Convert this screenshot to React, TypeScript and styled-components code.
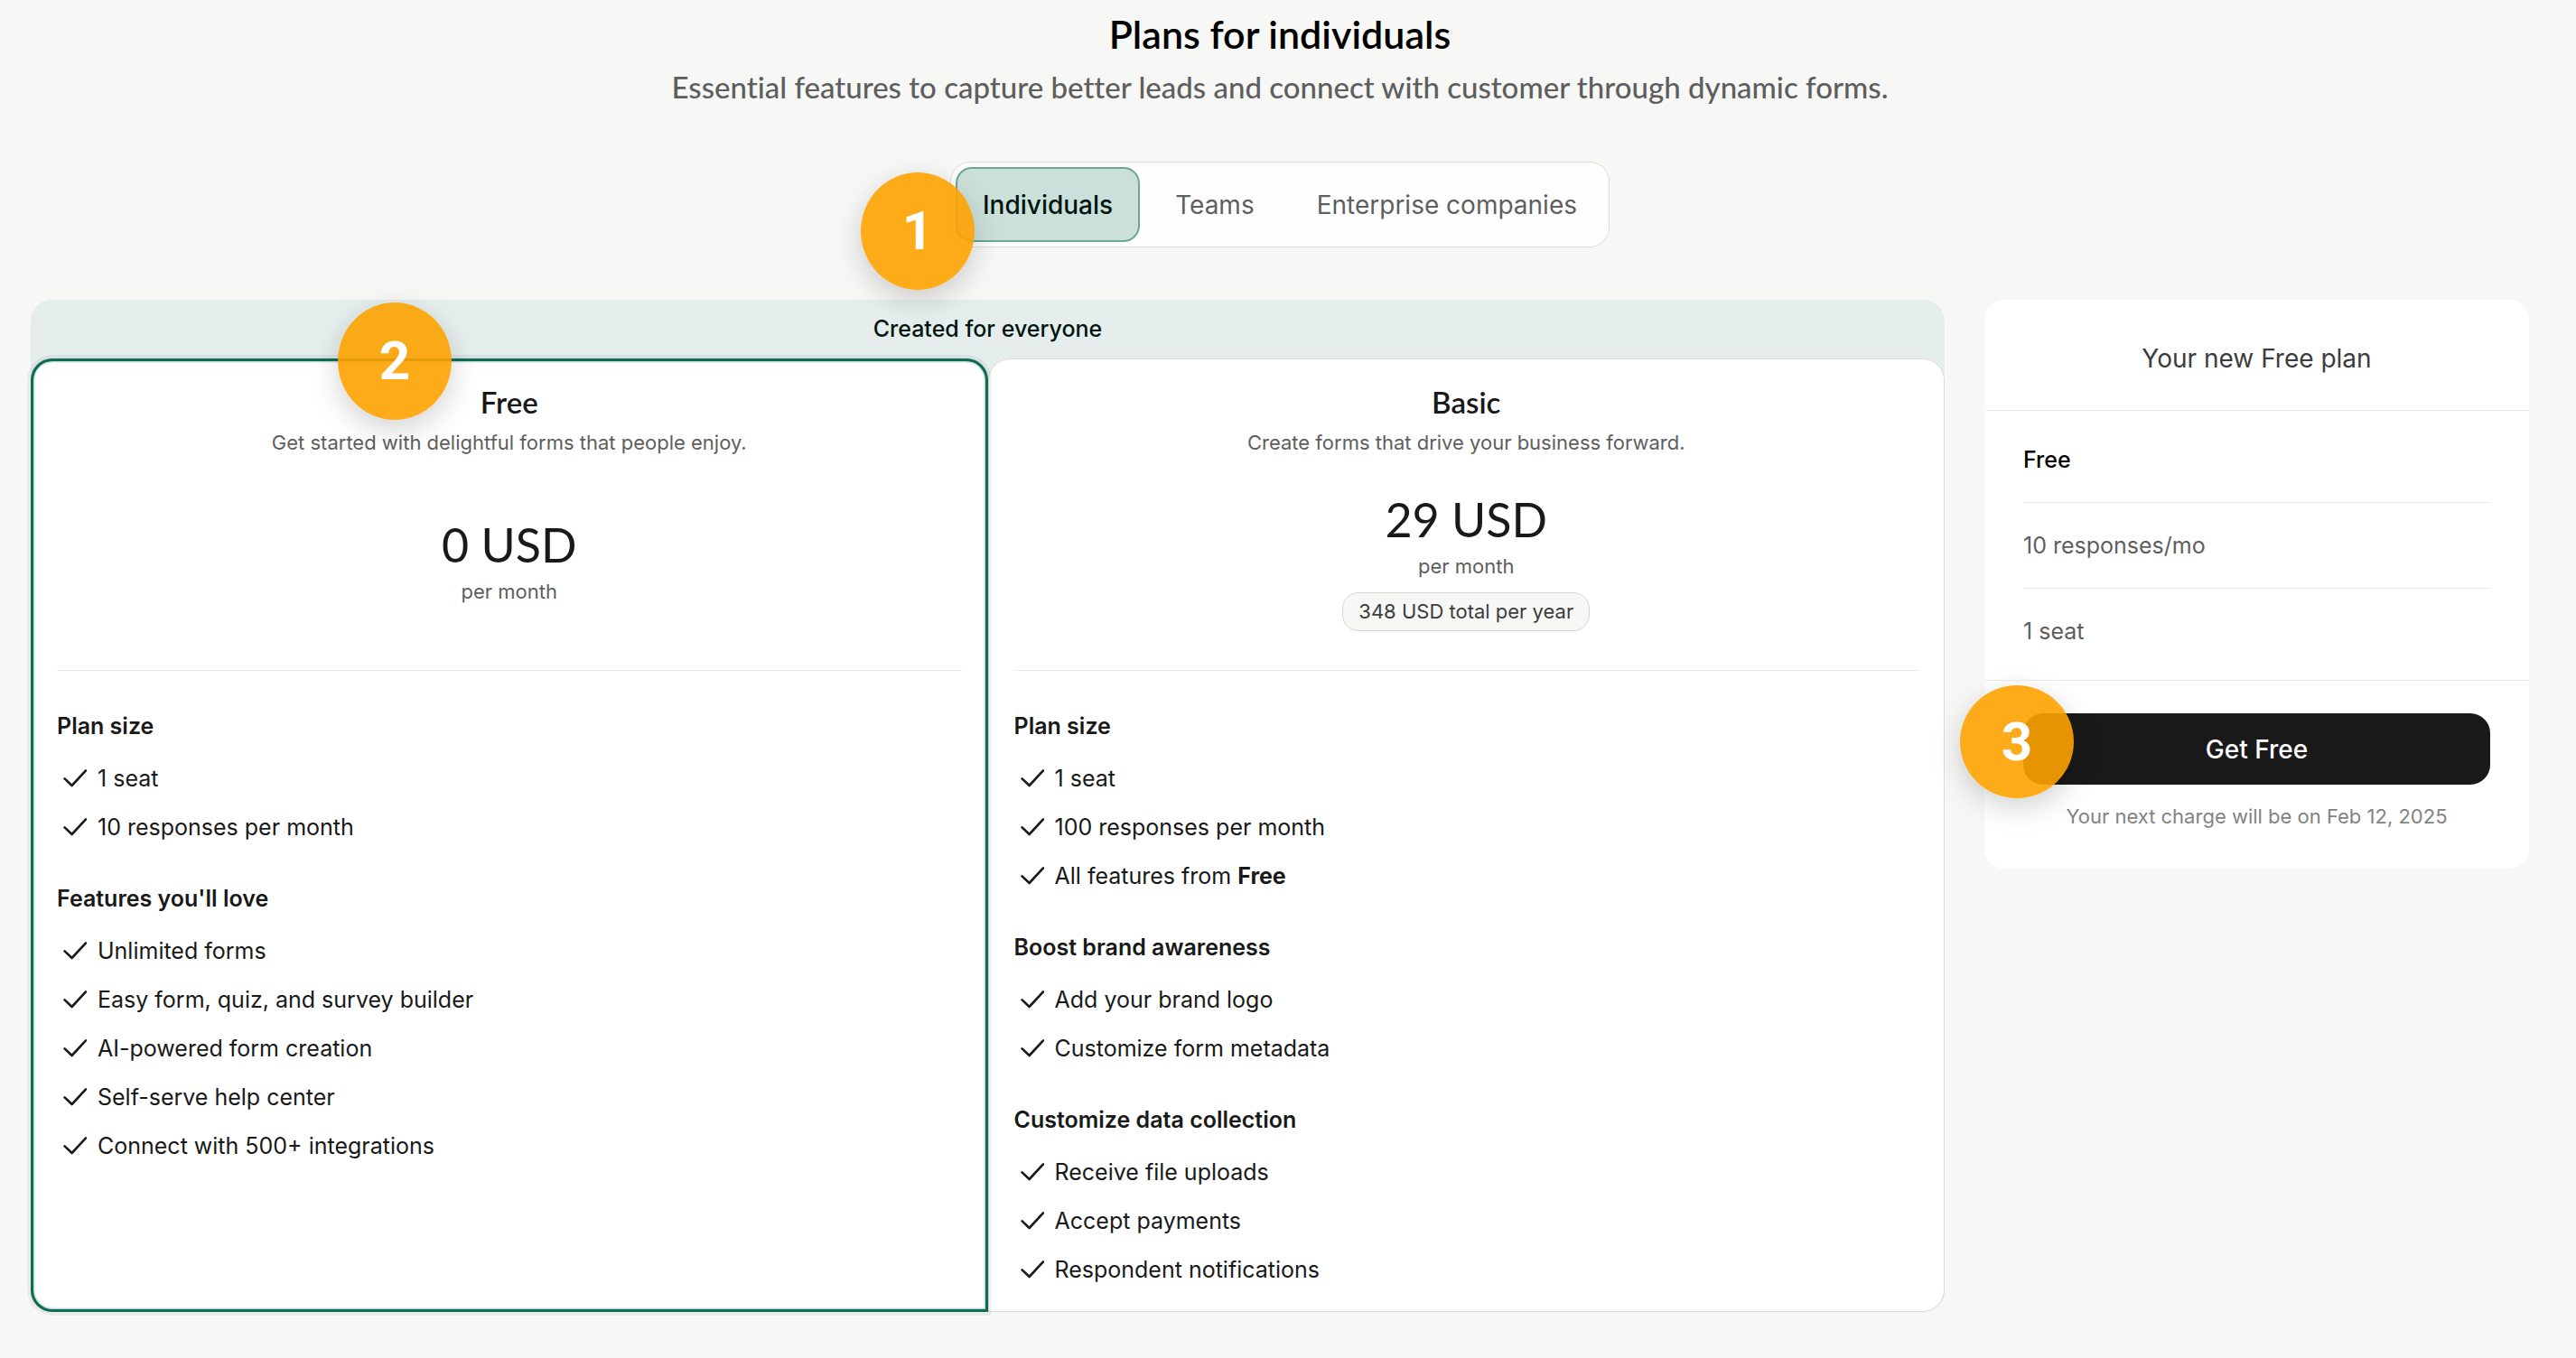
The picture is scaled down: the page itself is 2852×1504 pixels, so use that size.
import React, { useState } from "react";
import styled, { createGlobalStyle } from "styled-components";

const heading = `Lato, "Open Sans", sans-serif`;
const body = `Inter, "Liberation Sans", sans-serif`;

const GlobalStyle = createGlobalStyle`
  *, *::before, *::after { box-sizing: border-box; }
  body {
    margin: 0;
    background: #f7f7f5;
    color: #191919;
    font-family: ${body};
    font-size: 25px;
    -webkit-font-smoothing: antialiased;
  }
  h1, h2, h3, p, ul { margin: 0; padding: 0; }
  ul { list-style: none; }
  button { font-family: inherit; cursor: pointer; }
`;

const Page = styled.main`
  padding: 14px 52px 51px 34px;
`;

const Header = styled.header`
  display: flex;
  flex-direction: column;
  align-items: center;
  gap: 10px;
  text-align: center;
  font-family: ${heading};
  font-variant-ligatures: none;
`;

const Title = styled.h1`
  font-size: 43px;
  line-height: 48px;
  font-weight: 600;
  color: #000;
`;

const Subtitle = styled.p`
  font-size: 33px;
  line-height: 48px;
  font-weight: 500;
  color: #5e5e5e;
`;

const TabsWrap = styled.div`
  position: relative;
  width: fit-content;
  margin: 59px auto 58px;
`;

const TabList = styled.div`
  display: flex;
  gap: 9px;
  padding: 5px;
  border: 1px solid #dcdcda;
  border-radius: 22px;
  background: #fefefe;
`;

const Tab = styled.button<{ $active: boolean }>`
  height: 83px;
  padding: 0 28px;
  border: 2px solid ${(p) => (p.$active ? "#6ba898" : "#fefefe")};
  border-radius: 18px;
  background: ${(p) => (p.$active ? "#cce0db" : "#fefefe")};
  color: ${(p) => (p.$active ? "#00150f" : "#5e5e5e")};
  font-size: 28px;
  font-weight: ${(p) => (p.$active ? 500 : 400)};
`;

const Badge = styled.span<{ $left: number; $top: number; $height?: number }>`
  position: absolute;
  z-index: 2;
  left: ${(p) => p.$left}px;
  top: ${(p) => p.$top}px;
  display: flex;
  align-items: center;
  justify-content: center;
  width: 126px;
  height: ${(p) => p.$height ?? 130}px;
  border-radius: 50%;
  background: rgba(253, 162, 0, 0.9);
  box-shadow: 0 10px 32px rgba(0, 0, 0, 0.18);
  color: #fff;
  font-family: Roboto, sans-serif;
  font-size: 60px;
  font-weight: 700;
  line-height: 60px;
`;

const Columns = styled.div`
  display: grid;
  grid-template-columns: minmax(0, 1fr) 603px;
  align-items: start;
  gap: 44px;
`;

const Plans = styled.section`
  border-radius: 24px;
  background: #e5eeec;
`;

const Banner = styled.h2`
  font-size: 25px;
  line-height: 65px;
  font-weight: 500;
  color: #00150f;
  text-align: center;
`;

const PlanGrid = styled.div`
  display: grid;
  grid-template-columns: 1fr 1fr;
`;

const Card = styled.article<{ $selected?: boolean }>`
  position: relative;
  padding: 28px 29px 20px;
  border-radius: ${(p) => (p.$selected ? "24px 24px 0 24px" : "24px 24px 24px 0")};
  background: #fff;
  box-shadow: ${(p) =>
    p.$selected
      ? "inset 0 0 0 3px #0e6b56, inset 0 0 2px 4px rgba(14, 107, 86, 0.35), 0 0 0 4px rgba(0, 0, 0, 0.05)"
      : "inset 0 0 0 1px #dadad8"};
  z-index: ${(p) => (p.$selected ? 1 : 0)};
`;

const PlanName = styled.h3`
  font-family: ${heading};
  font-size: 33px;
  line-height: 40px;
  font-weight: 600;
  text-align: center;
`;

const PlanText = styled.p`
  margin-top: 8px;
  font-size: 22px;
  line-height: 34px;
  color: #5e5e5e;
  text-align: center;
`;

const PriceBox = styled.div`
  display: flex;
  flex-direction: column;
  align-items: center;
  justify-content: center;
  height: 227px;
  margin-bottom: 8px;
`;

const Price = styled.p`
  font-family: ${heading};
  font-size: 52px;
  line-height: 66px;
`;

const Period = styled.p`
  margin-top: 3px;
  font-size: 22px;
  line-height: 32px;
  color: #5e5e5e;
`;

const Total = styled.span`
  margin-top: 13px;
  padding: 0 17px;
  border: 1px solid #d4d4d2;
  border-radius: 18px;
  background: #f7f7f5;
  font-size: 22px;
  line-height: 41px;
  color: #3c3c3c;
`;

const Features = styled.div`
  display: flex;
  flex-direction: column;
  gap: 34px;
  padding-top: 43px;
  border-top: 1px solid #ebebeb;
`;

const GroupTitle = styled.h4`
  margin: 0 0 13px;
  font-size: 25px;
  line-height: 36px;
  font-weight: 600;
`;

const Feature = styled.li`
  display: flex;
  align-items: center;
  gap: 12px;
  padding-left: 7px;
  line-height: 54px;

  strong { font-weight: 700; }
`;

const Summary = styled.aside`
  border-radius: 22px;
  background: #fff;
`;

const SummaryTitle = styled.h2`
  padding: 45px 43px 37px;
  border-bottom: 1px solid #ebebeb;
  font-size: 28px;
  line-height: 40px;
  font-weight: 400;
  color: #3c3c3c;
  text-align: center;
`;

const SummaryList = styled.ul`
  padding: 7px 43px;
  border-bottom: 1px solid #ebebeb;
`;

const SummaryRow = styled.li<{ $strong?: boolean }>`
  line-height: 94px;
  font-weight: ${(p) => (p.$strong ? 500 : 400)};
  color: ${(p) => (p.$strong ? "#000" : "#5e5e5e")};

  & + & { border-top: 1px solid #ebebeb; }
`;

const Checkout = styled.div`
  position: relative;
  padding: 36px 43px 42px;
  text-align: center;
`;

const BuyButton = styled.button`
  display: block;
  width: 100%;
  height: 79px;
  border: 0;
  border-radius: 22px;
  background: #191919;
  color: #fff;
  font-size: 28px;
  font-weight: 500;
`;

const Note = styled.p`
  margin-top: 19px;
  font-size: 22px;
  line-height: 32px;
  color: #828282;
`;

const Check = () => (
  <svg width="26" height="20" viewBox="0 0 26 20" fill="none" aria-hidden="true">
    <path
      d="M1.6 10.4 9.6 18 25 1.4"
      stroke="#191919"
      strokeWidth="2.6"
      strokeLinecap="round"
      strokeLinejoin="round"
    />
  </svg>
);

type Group = { title: string; items: React.ReactNode[] };
type Plan = {
  name: string;
  text: string;
  price: string;
  total?: string;
  selected?: boolean;
  groups: Group[];
};

const plans: Plan[] = [
  {
    name: "Free",
    text: "Get started with delightful forms that people enjoy.",
    price: "0 USD",
    selected: true,
    groups: [
      { title: "Plan size", items: ["1 seat", "10 responses per month"] },
      {
        title: "Features you'll love",
        items: [
          "Unlimited forms",
          "Easy form, quiz, and survey builder",
          "AI-powered form creation",
          "Self-serve help center",
          "Connect with 500+ integrations",
        ],
      },
    ],
  },
  {
    name: "Basic",
    text: "Create forms that drive your business forward.",
    price: "29 USD",
    total: "348 USD total per year",
    groups: [
      {
        title: "Plan size",
        items: [
          "1 seat",
          "100 responses per month",
          <span key="free">
            All features from <strong>Free</strong>
          </span>,
        ],
      },
      { title: "Boost brand awareness", items: ["Add your brand logo", "Customize form metadata"] },
      {
        title: "Customize data collection",
        items: ["Receive file uploads", "Accept payments", "Respondent notifications"],
      },
    ],
  },
];

const tabs = ["Individuals", "Teams", "Enterprise companies"];

export default function App() {
  const [active, setActive] = useState(tabs[0]);

  return (
    <>
      <GlobalStyle />
      <Page>
        <Header>
          <Title>Plans for individuals</Title>
          <Subtitle>
            Essential features to capture better leads and connect with customer through dynamic forms.
          </Subtitle>
        </Header>

        <TabsWrap>
          <TabList role="tablist">
            {tabs.map((tab) => (
              <Tab
                key={tab}
                type="button"
                role="tab"
                aria-selected={tab === active}
                $active={tab === active}
                onClick={() => setActive(tab)}
              >
                {tab}
              </Tab>
            ))}
          </TabList>
          <Badge $left={-99} $top={12}>1</Badge>
        </TabsWrap>

        <Columns>
          <Plans>
            <Banner>Created for everyone</Banner>
            <PlanGrid>
              {plans.map((plan) => (
                <Card key={plan.name} $selected={plan.selected}>
                  {plan.selected && <Badge $left={340} $top={-62}>2</Badge>}
                  <PlanName>{plan.name}</PlanName>
                  <PlanText>{plan.text}</PlanText>
                  <PriceBox>
                    <Price>{plan.price}</Price>
                    <Period>per month</Period>
                    {plan.total && <Total>{plan.total}</Total>}
                  </PriceBox>
                  <Features>
                    {plan.groups.map((group) => (
                      <section key={group.title}>
                        <GroupTitle>{group.title}</GroupTitle>
                        <ul>
                          {group.items.map((item, i) => (
                            <Feature key={i}>
                              <Check />
                              {item}
                            </Feature>
                          ))}
                        </ul>
                      </section>
                    ))}
                  </Features>
                </Card>
              ))}
            </PlanGrid>
          </Plans>

          <Summary>
            <SummaryTitle>Your new Free plan</SummaryTitle>
            <SummaryList>
              <SummaryRow $strong>Free</SummaryRow>
              <SummaryRow>10 responses/mo</SummaryRow>
              <SummaryRow>1 seat</SummaryRow>
            </SummaryList>
            <Checkout>
              <BuyButton type="button">Get Free</BuyButton>
              <Note>Your next charge will be on Feb 12, 2025</Note>
              <Badge $left={-27} $top={5} $height={125}>3</Badge>
            </Checkout>
          </Summary>
        </Columns>
      </Page>
    </>
  );
}
